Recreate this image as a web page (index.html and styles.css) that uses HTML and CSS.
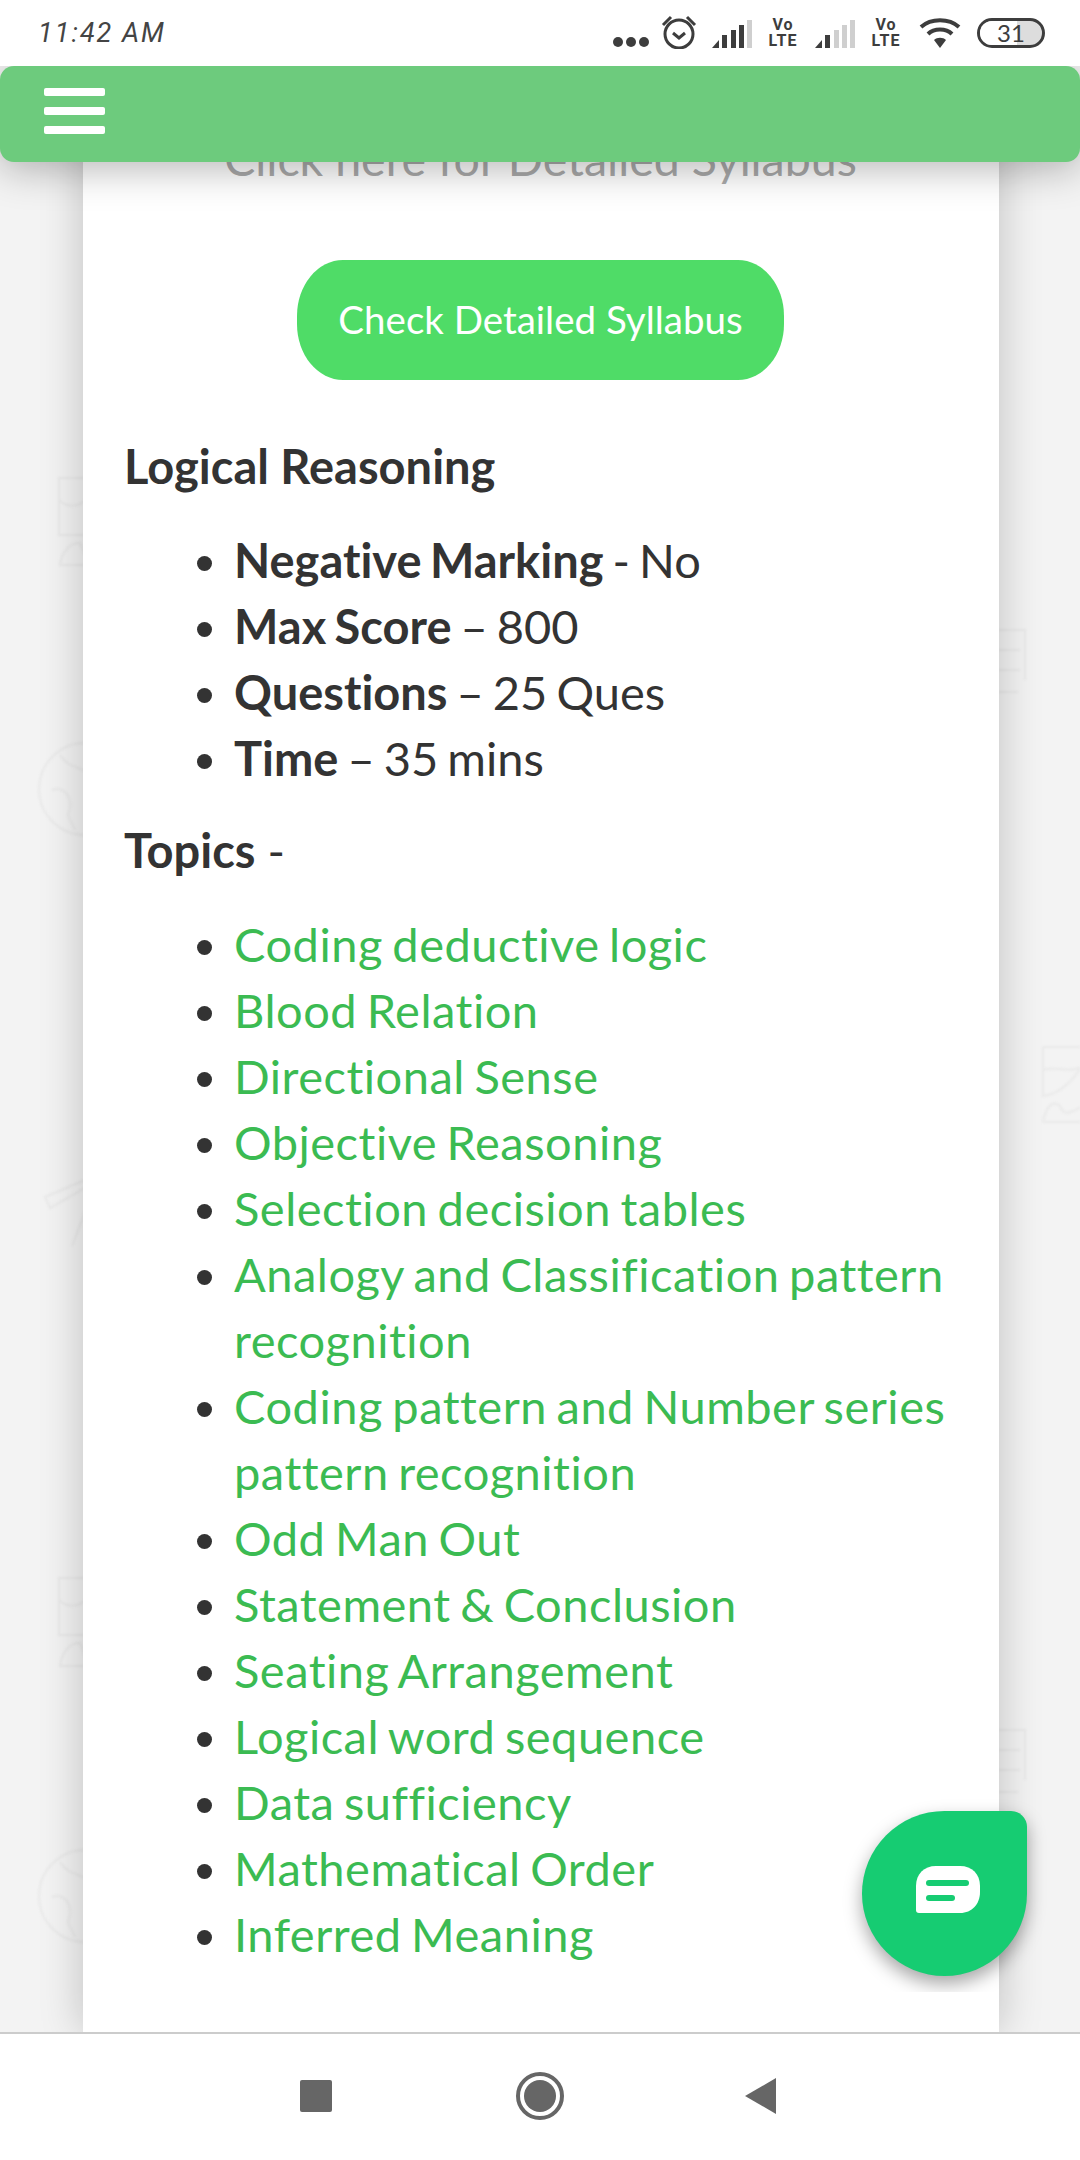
FILE: index.html
```html
<!DOCTYPE html>
<html lang="en">
<head>
  <meta charset="UTF-8">
  <meta name="viewport" content="width=device-width, initial-scale=1">
  <title>Logical Reasoning Syllabus</title>
  <link rel="stylesheet" href="styles.css">
</head>
<body>

<div class="status-bar">
  <span class="clock">11:42 AM</span>
  <div class="status-icons">
    <span class="dots"><i></i><i></i><i></i></span>
    <svg class="alarm" width="36" height="34" viewBox="0 0 36 34">
      <circle cx="18" cy="19" r="14" fill="none" stroke="#3d3d3d" stroke-width="3"/>
      <path d="M12 18l6 5 6-5" fill="none" stroke="#3d3d3d" stroke-width="3"/>
      <path d="M2 10L10 2M34 10L26 2" fill="none" stroke="#3d3d3d" stroke-width="3"/>
    </svg>
    <svg class="signal" width="40" height="29" viewBox="0 0 40 29">
      <path d="M0 29L7 21V29Z" fill="#3d3d3d"/>
      <rect x="10" y="16" width="5" height="13" fill="#3d3d3d"/>
      <rect x="19" y="11" width="5" height="18" fill="#3d3d3d"/>
      <rect x="27" y="6" width="5" height="23" fill="#3d3d3d"/>
      <rect x="35" y="1" width="5" height="28" fill="#cfcfcf"/>
    </svg>
    <span class="volte">Vo<br>LTE</span>
    <svg class="signal" width="40" height="29" viewBox="0 0 40 29">
      <path d="M0 29L7 21V29Z" fill="#3d3d3d"/>
      <rect x="10" y="16" width="5" height="13" fill="#3d3d3d"/>
      <rect x="19" y="11" width="5" height="18" fill="#cfcfcf"/>
      <rect x="27" y="6" width="5" height="23" fill="#cfcfcf"/>
      <rect x="35" y="1" width="5" height="28" fill="#cfcfcf"/>
    </svg>
    <span class="volte">Vo<br>LTE</span>
    <svg class="wifi" width="42" height="30" viewBox="0 0 42 30">
      <path d="M2 9C12 0 30 0 40 9M9 16C15 10 27 10 33 16" fill="none" stroke="#3d3d3d" stroke-width="4"/>
      <path d="M15 22C18 19 24 19 27 22L21 30Z" fill="#3d3d3d"/>
    </svg>
    <div class="battery"><span class="battery-level"></span><span class="battery-num">31</span></div>
  </div>
</div>

<div class="page">
  <svg class="doodles" width="1080" height="1966" viewBox="0 66 1080 1966">
    <g fill="none" stroke="#e9e9e9" stroke-width="2">
      <path d="M59 478H90V535H59ZM59 500C70 510 80 505 90 498M60 565C62 550 72 542 80 543L90 565Z"/>
      <circle cx="85" cy="789" r="46"/>
      <path d="M60 755C70 770 80 765 90 775M52 790C65 785 75 800 68 815L75 830"/>
      <path d="M45 1197L85 1180L88 1186L50 1208ZM72 1246L85 1212"/>
      <path d="M59 1578H90V1635H59ZM59 1600C70 1610 80 1605 90 1598M60 1666C62 1650 72 1642 80 1643L90 1666Z"/>
      <circle cx="85" cy="1896" r="46"/>
      <path d="M60 1862C70 1877 80 1872 90 1882M52 1897C65 1892 75 1907 68 1922L75 1937"/>
      <path d="M990 630H1025V680M990 650H1020M990 670H1020M990 692H1018"/>
      <path d="M990 1730H1025V1780M990 1750H1020M990 1770H1020M990 1792H1018"/>
      <path d="M1043 1047H1085M1043 1047V1096C1060 1094 1075 1080 1085 1060M1043 1070C1055 1065 1070 1075 1085 1065M1043 1122C1046 1105 1054 1100 1060 1106C1064 1118 1072 1112 1085 1105M1043 1122H1085"/>
    </g>
  </svg>

  <header class="top-nav">
    <div class="menu-btn"><span></span><span></span><span></span></div>
  </header>

  <main class="card">
    <h2 class="syllabus-title">Click here for Detailed Syllabus</h2>
    <div class="btn-row"><a class="syllabus-btn">Check Detailed Syllabus</a></div>

    <p class="section-head"><b>Logical Reasoning</b></p>
    <ul class="info-list">
      <li><b>Negative Marking</b> - No</li>
      <li><b>Max Score</b> – 800</li>
      <li><b>Questions</b> – 25 Ques</li>
      <li><b>Time</b> – 35 mins</li>
    </ul>

    <p class="section-head"><b>Topics</b> -</p>
    <ul class="topic-list">
      <li><a>Coding deductive logic</a></li>
      <li><a>Blood Relation</a></li>
      <li><a>Directional Sense</a></li>
      <li><a>Objective Reasoning</a></li>
      <li><a>Selection decision tables</a></li>
      <li><a>Analogy and Classification pattern recognition</a></li>
      <li><a>Coding pattern and Number series pattern recognition</a></li>
      <li><a>Odd Man Out</a></li>
      <li><a>Statement &amp; Conclusion</a></li>
      <li><a>Seating Arrangement</a></li>
      <li><a>Logical word sequence</a></li>
      <li><a>Data sufficiency</a></li>
      <li><a>Mathematical Order</a></li>
      <li><a>Inferred Meaning</a></li>
    </ul>
  </main>

  <div class="chat-frame">
    <div class="chat-btn">
      <svg width="64" height="48" viewBox="0 0 64 48">
        <path d="M0 20C0 8 8 0 20 0H44C56 0 64 8 64 20V26C64 38 56 47 44 47H3C1 47 0 46 0 44Z" fill="#fff"/>
        <rect x="10" y="14" width="43" height="6" rx="3" fill="#16cc72"/>
        <rect x="10" y="29" width="29" height="6" rx="3" fill="#16cc72"/>
      </svg>
    </div>
  </div>
</div>

<nav class="nav-bar">
  <span class="nav-square"></span>
  <span class="nav-circle"><i></i></span>
  <svg width="32" height="36" viewBox="0 0 32 36"><path d="M0 18L31 0V36Z" fill="#666"/></svg>
</nav>

</body>
</html>
```

FILE: styles.css
```css
* {
  box-sizing: border-box;
}
body {
  margin: 0;
  width: 1080px;
  height: 2160px;
  display: flex;
  flex-direction: column;
  overflow: hidden;
  background: #fff;
  font-family: Lato, sans-serif;
  font-variant-ligatures: none;
  color: #333;
}

/* phone status bar */
.status-bar {
  height: 66px;
  flex: none;
  display: flex;
  align-items: center;
  justify-content: space-between;
  padding: 0 35px 0 38px;
  background: #fff;
}
.clock {
  font-family: Roboto, sans-serif;
  font-style: italic;
  font-size: 27px;
  letter-spacing: 2px;
  color: #444;
}
.status-icons {
  display: flex;
  align-items: center;
}
.dots {
  display: flex;
  gap: 3px;
  margin-top: 18px;
}
.dots i {
  width: 10px;
  height: 10px;
  border-radius: 50%;
  background: #3d3d3d;
}
.alarm {
  margin-left: 12px;
  margin-top: -2px;
}
.signal {
  margin-left: 15px;
}
.volte {
  margin-left: 14px;
  width: 34px;
  font-family: Roboto, sans-serif;
  font-size: 16px;
  line-height: 16px;
  font-weight: 700;
  letter-spacing: 1px;
  color: #3d3d3d;
  text-align: center;
}
.wifi {
  margin-left: 16px;
}
.battery {
  margin-left: 16px;
  width: 68px;
  height: 30px;
  border: 3px solid #3d3d3d;
  border-radius: 15px;
  position: relative;
  overflow: hidden;
  text-align: center;
  font-size: 24px;
  line-height: 23px;
  color: #3d3d3d;
  background: #ddd;
}
.battery-level {
  position: absolute;
  left: 0;
  top: 0;
  bottom: 0;
  width: 60%;
  background: #fff;
}
.battery-num {
  position: relative;
}

/* page */
.page {
  flex: 1;
  position: relative;
  overflow: hidden;
  background: #f3f3f3;
}
.doodles {
  position: absolute;
  left: 0;
  top: 0;
  filter: blur(1.2px);
}
.top-nav {
  position: absolute;
  z-index: 5;
  left: 0;
  right: 0;
  top: 0;
  height: 96px;
  padding: 22px 44px;
  background: #6dcb7d;
  border-radius: 14px;
  box-shadow: 0 6px 40px rgba(0, 0, 0, 0.3);
}
.menu-btn span {
  display: block;
  width: 61px;
  height: 8px;
  margin-bottom: 11px;
  background: #fff;
  border-radius: 2px;
}
.card {
  position: relative;
  width: 916px;
  height: 100%;
  margin-left: 83px;
  padding: 0 42px 0 41px;
  background: #fff;
  box-shadow: 0 0 40px rgba(0, 0, 0, 0.22);
}
.syllabus-title {
  margin: 0;
  padding-top: 62px;
  font-size: 46.5px;
  line-height: 60px;
  font-weight: 400;
  text-align: center;
  color: #aaa;
}
.btn-row {
  display: flex;
  justify-content: center;
  margin-top: 72px;
}
.syllabus-btn {
  width: 487px;
  height: 120px;
  padding-bottom: 2px;
  line-height: 118px;
  text-align: center;
  border-radius: 46px / 56px;
  background: #4fdc67;
  color: #fff;
  font-size: 38.5px;
}
.section-head {
  margin: 53px 0 0;
  font-size: 47px;
  line-height: 66px;
}
b {
  font-weight: 700;
}
.section-head + ul {
  margin-top: 28px;
}
ul {
  margin: 0;
  padding: 0 0 0 110px;
  font-size: 47px;
  line-height: 66px;
  font-weight: 400;
}
.info-list {
  word-spacing: -3px;
}
.info-list + .section-head {
  margin-top: 26px;
}
.section-head + .topic-list {
  margin-top: 28px;
}
.topic-list a {
  color: #3bbb52;
  letter-spacing: 0.5px;
  word-spacing: -3px;
}

/* chat bubble, sits in its own clipped frame */
.chat-frame {
  position: absolute;
  z-index: 4;
  right: 0;
  bottom: 40px;
  width: 260px;
  height: 240px;
  overflow: hidden;
}
.chat-btn {
  position: absolute;
  left: 42px;
  top: 59px;
  width: 165px;
  height: 165px;
  padding: 0 0 8px 7px;
  display: flex;
  align-items: center;
  justify-content: center;
  background: #16cc72;
  border-radius: 50% 16px 50% 50%;
  box-shadow: 0 8px 18px rgba(0, 0, 0, 0.35);
}

/* android nav */
.nav-bar {
  height: 128px;
  flex: none;
  position: relative;
  display: flex;
  align-items: center;
  background: #fff;
  border-top: 2px solid #ccc;
  padding: 0 0 2px 300px;
}
.nav-square {
  width: 32px;
  height: 32px;
  border-radius: 2px;
  background: #666;
}
.nav-circle {
  margin-left: 184px;
  width: 48px;
  height: 48px;
  padding: 4px;
  border: 4px solid #666;
  border-radius: 50%;
}
.nav-circle i {
  display: block;
  width: 32px;
  height: 32px;
  border-radius: 50%;
  background: #666;
}
.nav-bar svg {
  margin-left: 181px;
}
```
